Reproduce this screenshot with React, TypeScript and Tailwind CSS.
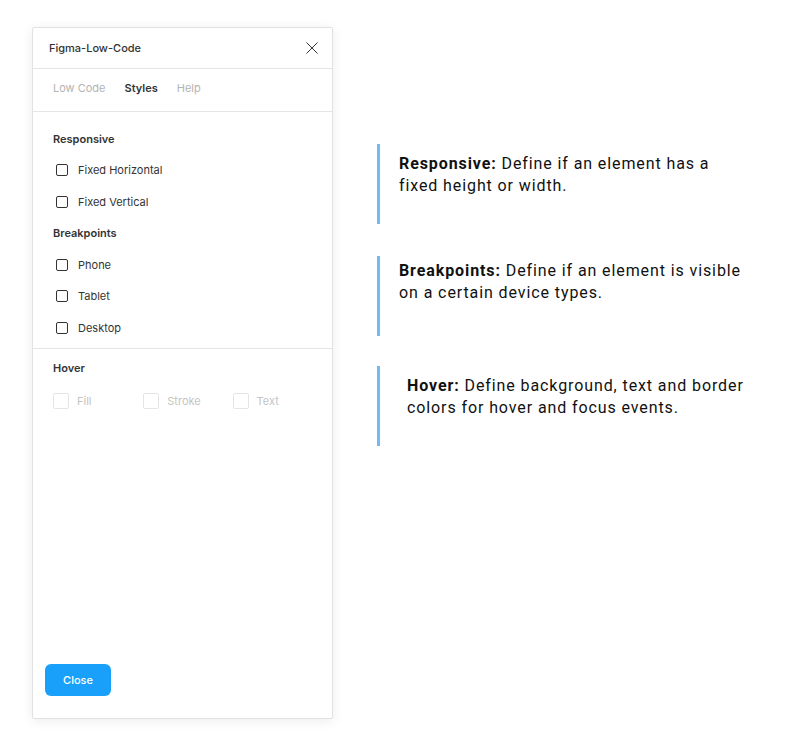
import React from "react";

type Item = { label: string };

const responsive: Item[] = [{ label: "Fixed Horizontal" }, { label: "Fixed Vertical" }];
const breakpoints: Item[] = [{ label: "Phone" }, { label: "Tablet" }, { label: "Desktop" }];

function CheckRow({ label }: Item) {
  return (
    <div className="flex h-[31.5px] items-center">
      <span className="ml-[3px] h-[12px] w-[12px] rounded-[2px] border border-[#333]" />
      <span className="ml-[10px] text-[11px] text-[#333]">{label}</span>
    </div>
  );
}

function Heading({ children }: { children: React.ReactNode }) {
  return <div className="flex h-[31.5px] items-center text-[11px] font-semibold text-[#333]">{children}</div>;
}

function GhostCheck({ label, width }: { label: string; width: string }) {
  return (
    <div className={`flex items-center ${width}`}>
      <span className="h-[16px] w-[16px] rounded-[2px] border border-[#e5e5e5]" />
      <span className="ml-[8px] text-[11px] text-[#c4c4c4]">{label}</span>
    </div>
  );
}

function Note({ title, body, pad }: { title: string; body: React.ReactNode; pad: string }) {
  return (
    <div className="flex h-[80px]">
      <div className="w-[3px] bg-[#72b9fa]" />
      <p className={`${pad} text-[16px] leading-[21.5px] tracking-[0.9px] text-[#111] whitespace-nowrap`}>
        <span className="font-bold">{title}</span> {body}
      </p>
    </div>
  );
}

export default function App() {
  return (
    <div
      className="flex min-h-[745px] w-[805px] bg-white"
      style={{ fontFamily: "Inter, 'Noto Sans', sans-serif" }}
    >
      {/* plugin panel */}
      <div className="ml-[32px] mt-[27px] flex h-[692px] w-[301px] flex-col rounded-[2px] border border-[#e2e2e2] bg-white shadow-[0_2px_12px_rgba(0,0,0,0.08)]">
        <div className="flex h-[41px] items-center justify-between border-b border-[#e5e5e5] pl-[16px] pr-[14px]">
          <span className="text-[11px] font-medium text-[#333]">Figma-Low-Code</span>
          <svg width="12" height="12" viewBox="0 0 12 12" className="text-[#333]">
            <path d="M0.5 0.5 L11.5 11.5 M11.5 0.5 L0.5 11.5" stroke="currentColor" strokeWidth="1" />
          </svg>
        </div>

        <div className="flex h-[43px] items-center gap-[19px] border-b border-[#e5e5e5] pb-[4px] pl-[20px] text-[11px]">
          <span className="text-[#b3b3b3]">Low Code</span>
          <span className="font-semibold text-[#333]">Styles</span>
          <span className="text-[#b3b3b3]">Help</span>
        </div>

        <div className="px-[20px] pt-[11px] pb-[4px]">
          <Heading>Responsive</Heading>
          {responsive.map((r) => (
            <CheckRow key={r.label} label={r.label} />
          ))}
          <Heading>Breakpoints</Heading>
          {breakpoints.map((b) => (
            <CheckRow key={b.label} label={b.label} />
          ))}
        </div>

        <div className="border-t border-[#e5e5e5] px-[20px] pt-[4px]">
          <Heading>Hover</Heading>
          <div className="mt-[9px] flex items-center">
            <GhostCheck label="Fill" width="w-[91px]" />
            <GhostCheck label="Stroke" width="w-[90px]" />
            <GhostCheck label="Text" width="w-[80px]" />
          </div>
        </div>

        <div className="mt-auto px-[12px] pb-[22px]">
          <button className="h-[32px] w-[66px] rounded-[6px] bg-[#18a0fb] text-[11px] font-medium text-white">
            Close
          </button>
        </div>
      </div>

      {/* notes */}
      <div
        className="ml-[44px] mt-[144px] flex flex-col"
        style={{ fontFamily: "Roboto, 'Liberation Sans', sans-serif" }}
      >
        <Note
          title="Responsive:"
          pad="pl-[19px] pt-[9px]"
          body={<>Define if an element has a<br />fixed height or width.</>}
        />
        <div className="h-[32px]" />
        <Note
          title="Breakpoints:"
          pad="pl-[19px] pt-[4px]"
          body={<>Define if an element is visible<br />on a certain device types.</>}
        />
        <div className="h-[30px]" />
        <Note
          title="Hover:"
          pad="pl-[27px] pt-[9px]"
          body={<>Define background, text and border<br />colors for hover and focus events.</>}
        />
      </div>
    </div>
  );
}
